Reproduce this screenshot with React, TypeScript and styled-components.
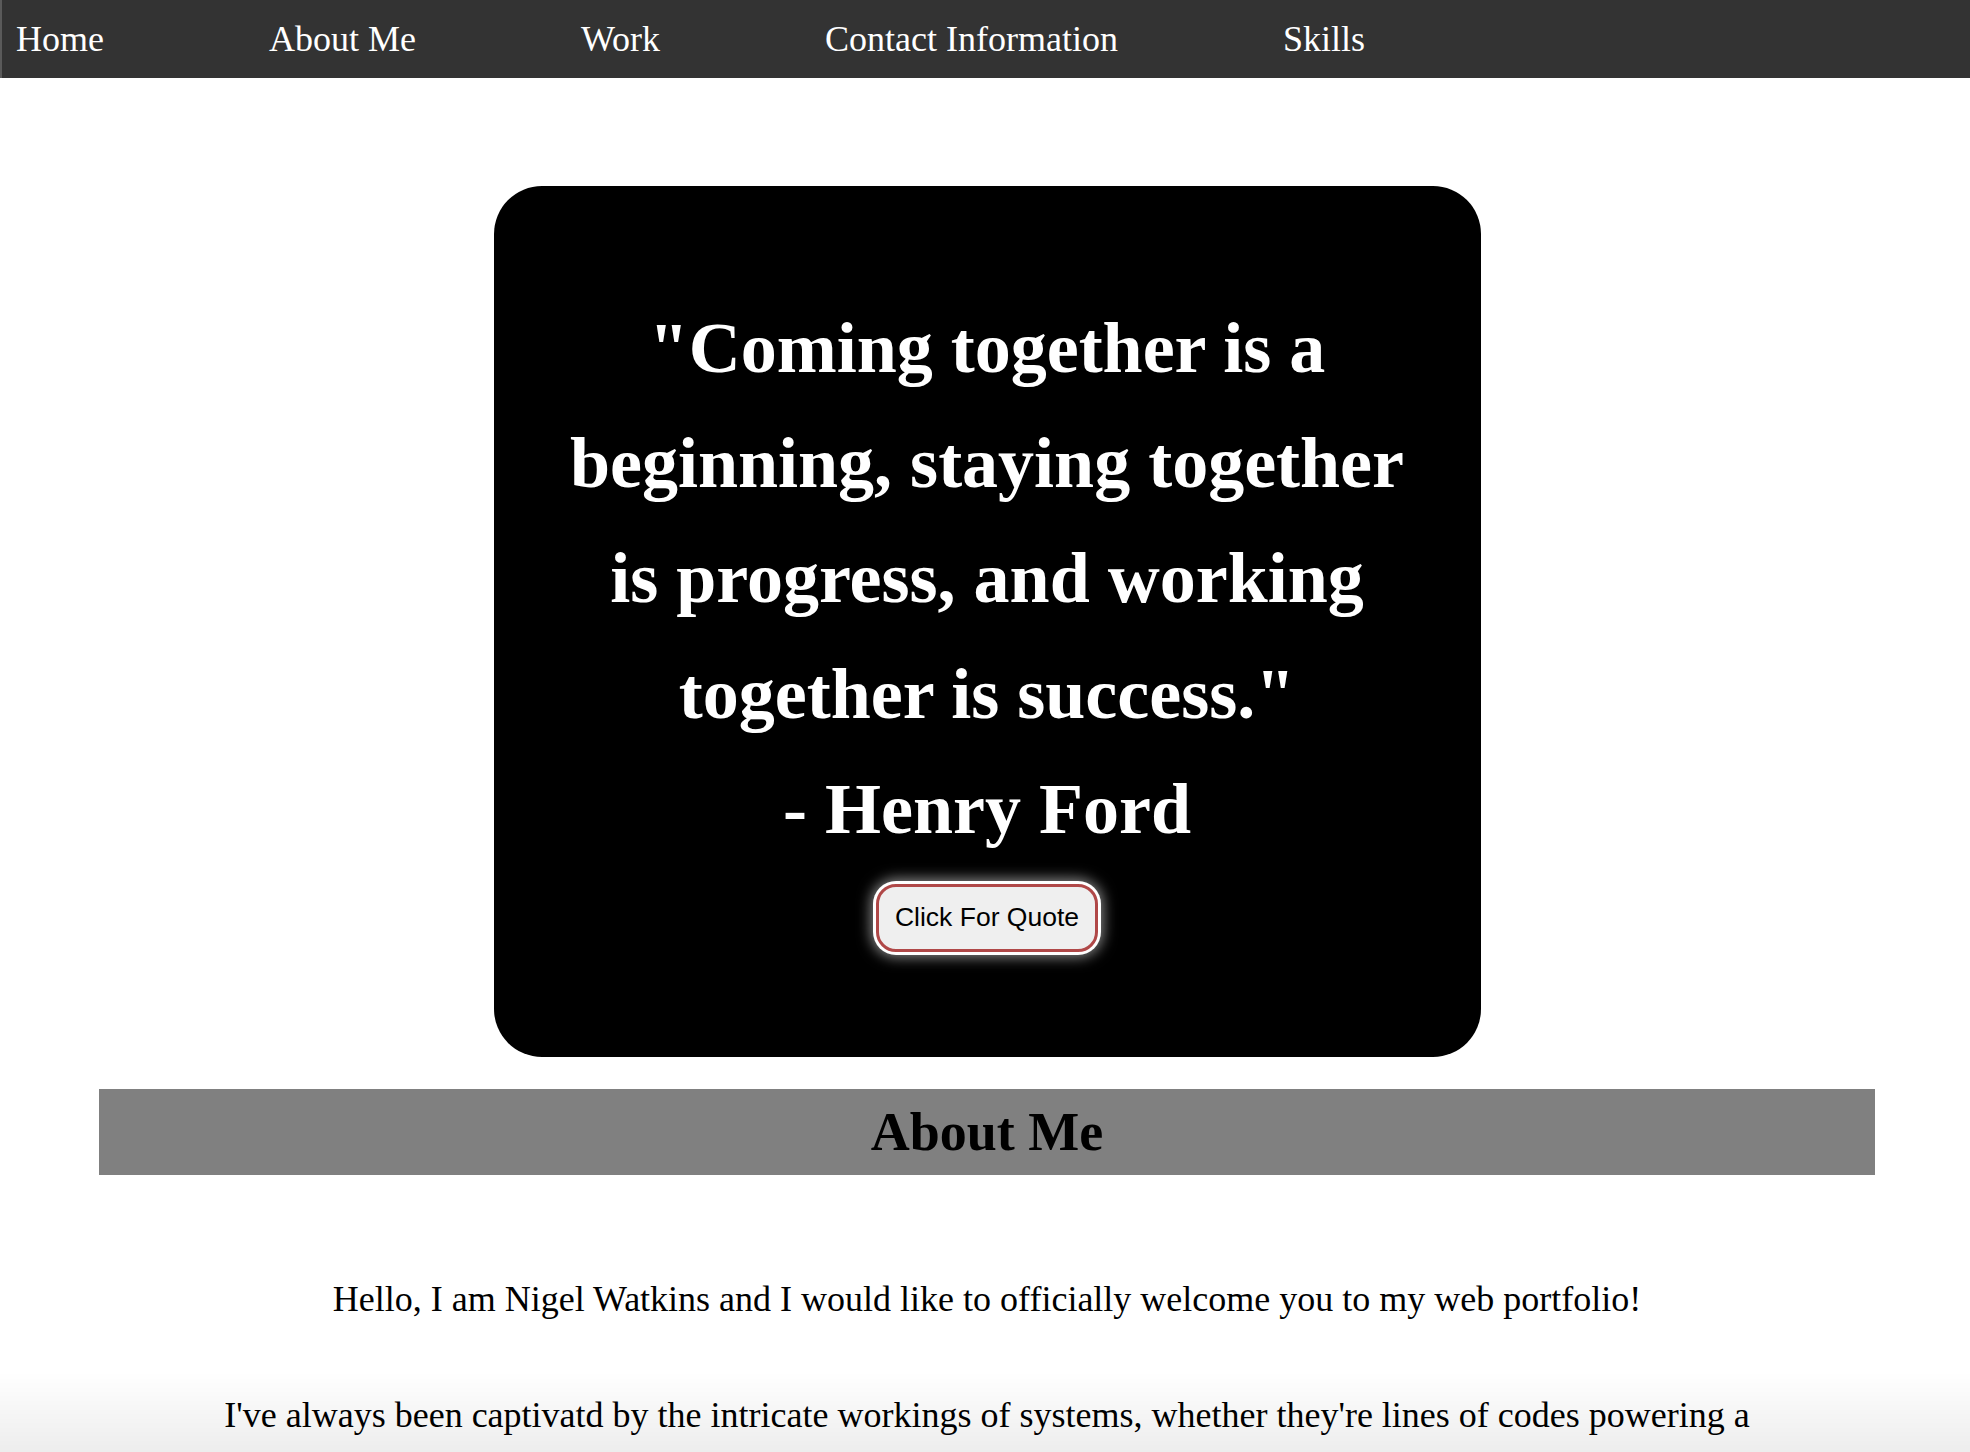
import React from "react"
import styled, { createGlobalStyle } from "styled-components"

const GlobalStyle = createGlobalStyle`
  html {
    scrollbar-width: none;
  }
  html::-webkit-scrollbar {
    display: none;
  }
  body {
    margin: 0;
    background: #fff;
    font-family: "Liberation Serif", "Times New Roman", serif;
    color: #000;
  }
`

const NavBar = styled.nav`
  display: flex;
  align-items: center;
  gap: 165px;
  height: 78px;
  padding-left: 14px;
  background: #333333;
  border-left: 2px solid #5a5a5a;
`

const NavLink = styled.a`
  color: #fff;
  font-size: 36px;
  text-decoration: none;
  white-space: nowrap;
`

const Main = styled.main`
  padding-left: 4px;
`

const QuoteCard = styled.section`
  width: 987px;
  box-sizing: border-box;
  margin: 108px auto 0;
  padding: 105px 60px;
  background: #000;
  border-radius: 48px;
  display: flex;
  flex-direction: column;
  align-items: center;
`

const QuoteText = styled.p`
  margin: 0;
  color: #fff;
  font-size: 72px;
  font-weight: bold;
  line-height: 1.6;
  text-align: center;
`

const QuoteButton = styled.button`
  margin-top: 17px;
  height: 68px;
  padding: 0 16px;
  font-family: "Liberation Sans", Arial, sans-serif;
  font-size: 26.5px;
  color: #000;
  background: #efefef;
  border: 3px solid #b04848;
  border-radius: 20px;
  box-shadow: 0 0 0 3px #fff, 0 0 14px 5px rgba(255, 255, 255, 0.55);
  cursor: pointer;
`

const SectionBar = styled.h2`
  width: 1776px;
  height: 86px;
  margin: 32px auto 0;
  display: flex;
  align-items: center;
  justify-content: center;
  background: #808080;
  font-size: 54px;
  font-weight: bold;
`

const AboutBody = styled.div`
  width: 1560px;
  margin: 0 auto;
  padding-top: 37px;
`

const Paragraph = styled.p`
  margin: 58px 0;
  font-size: 36px;
  line-height: 58px;
  text-align: center;
`

const BottomShade = styled.div`
  position: fixed;
  left: 0;
  right: 0;
  bottom: 0;
  height: 80px;
  pointer-events: none;
  background: linear-gradient(to bottom, rgba(0, 0, 0, 0), rgba(0, 0, 0, 0.07));
`

const navItems = ["Home", "About Me", "Work", "Contact Information", "Skills"]

export default function App() {
  return (
    <>
      <GlobalStyle />
      <NavBar>
        {navItems.map(item => (
          <NavLink key={item} href={"#" + item.toLowerCase().replace(/ /g, "-")}>
            {item}
          </NavLink>
        ))}
      </NavBar>
      <Main>
        <QuoteCard>
          <QuoteText>
            "Coming together is a beginning, staying together is progress, and working together is success."
            <br />- Henry Ford
          </QuoteText>
          <QuoteButton>Click For Quote</QuoteButton>
        </QuoteCard>
        <SectionBar>About Me</SectionBar>
        <AboutBody>
          <Paragraph>
            Hello, I am Nigel Watkins and I would like to officially welcome you to my web portfolio!
          </Paragraph>
          <Paragraph>
            I've always been captivatd by the intricate workings of systems, whether they're lines of codes powering a
            software application or the complex networks that keep the world connected.
          </Paragraph>
        </AboutBody>
      </Main>
      <BottomShade />
    </>
  )
}
